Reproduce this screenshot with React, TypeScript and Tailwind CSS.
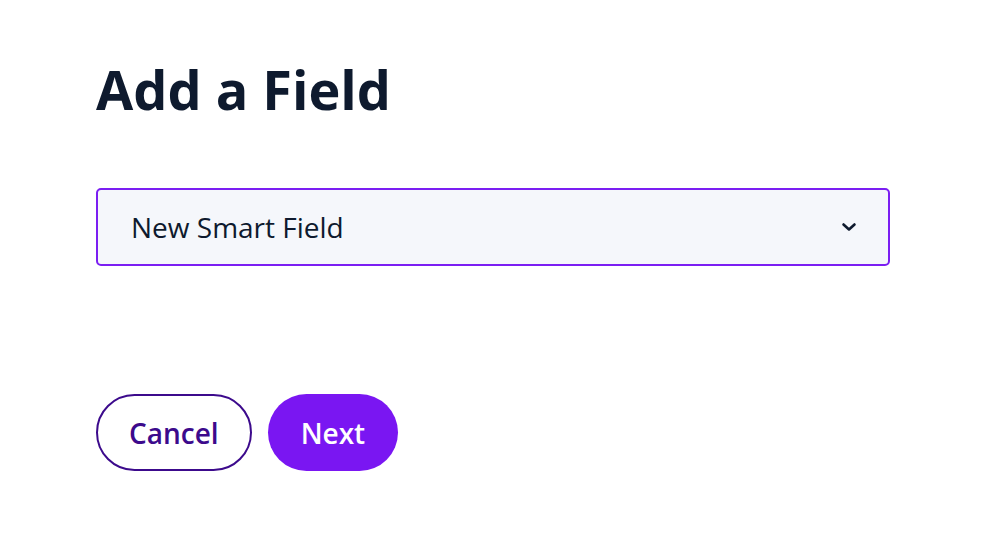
import { useState } from "react";

export default function App() {
  const [value, setValue] = useState("New Smart Field");

  return (
    <div className="min-h-screen bg-white px-[96px] pt-[62px] font-['Open_Sans','Noto_Sans',sans-serif] text-[#0e1a2e]">
      <h1 className="text-[54px] font-bold leading-none">Add a Field</h1>

      <div className="relative mt-[72px] w-[794px]">
        <select
          value={value}
          onChange={(e) => setValue(e.target.value)}
          className="h-[78px] w-full appearance-none rounded-[5px] border-2 border-[#7b1ef2] bg-[#f5f7fb] pl-[33px] pr-16 text-[28px] leading-none text-[#0e1a2e] outline-none"
        >
          <option>New Smart Field</option>
          <option>Text Field</option>
          <option>Number Field</option>
        </select>
        <svg
          className="pointer-events-none absolute right-[33px] top-1/2 h-[10px] w-[16px] -translate-y-1/2"
          viewBox="0 0 16 10"
          fill="none"
          stroke="#0e1a2e"
          strokeWidth="2.6"
          strokeLinecap="round"
          strokeLinejoin="round"
        >
          <path d="M2.5 2.5 8 7.5 13.5 2.5" />
        </svg>
      </div>

      <div className="mt-[128px] flex gap-[16px]">
        <button className="flex h-[77px] items-center rounded-full border-2 border-[#3c0a8c] px-[31px] text-[28px] font-semibold text-[#3c0a8c]">
          Cancel
        </button>
        <button className="flex h-[77px] items-center rounded-full bg-[#7a16f2] px-[33px] text-[28px] font-semibold text-white">
          Next
        </button>
      </div>
    </div>
  );
}
